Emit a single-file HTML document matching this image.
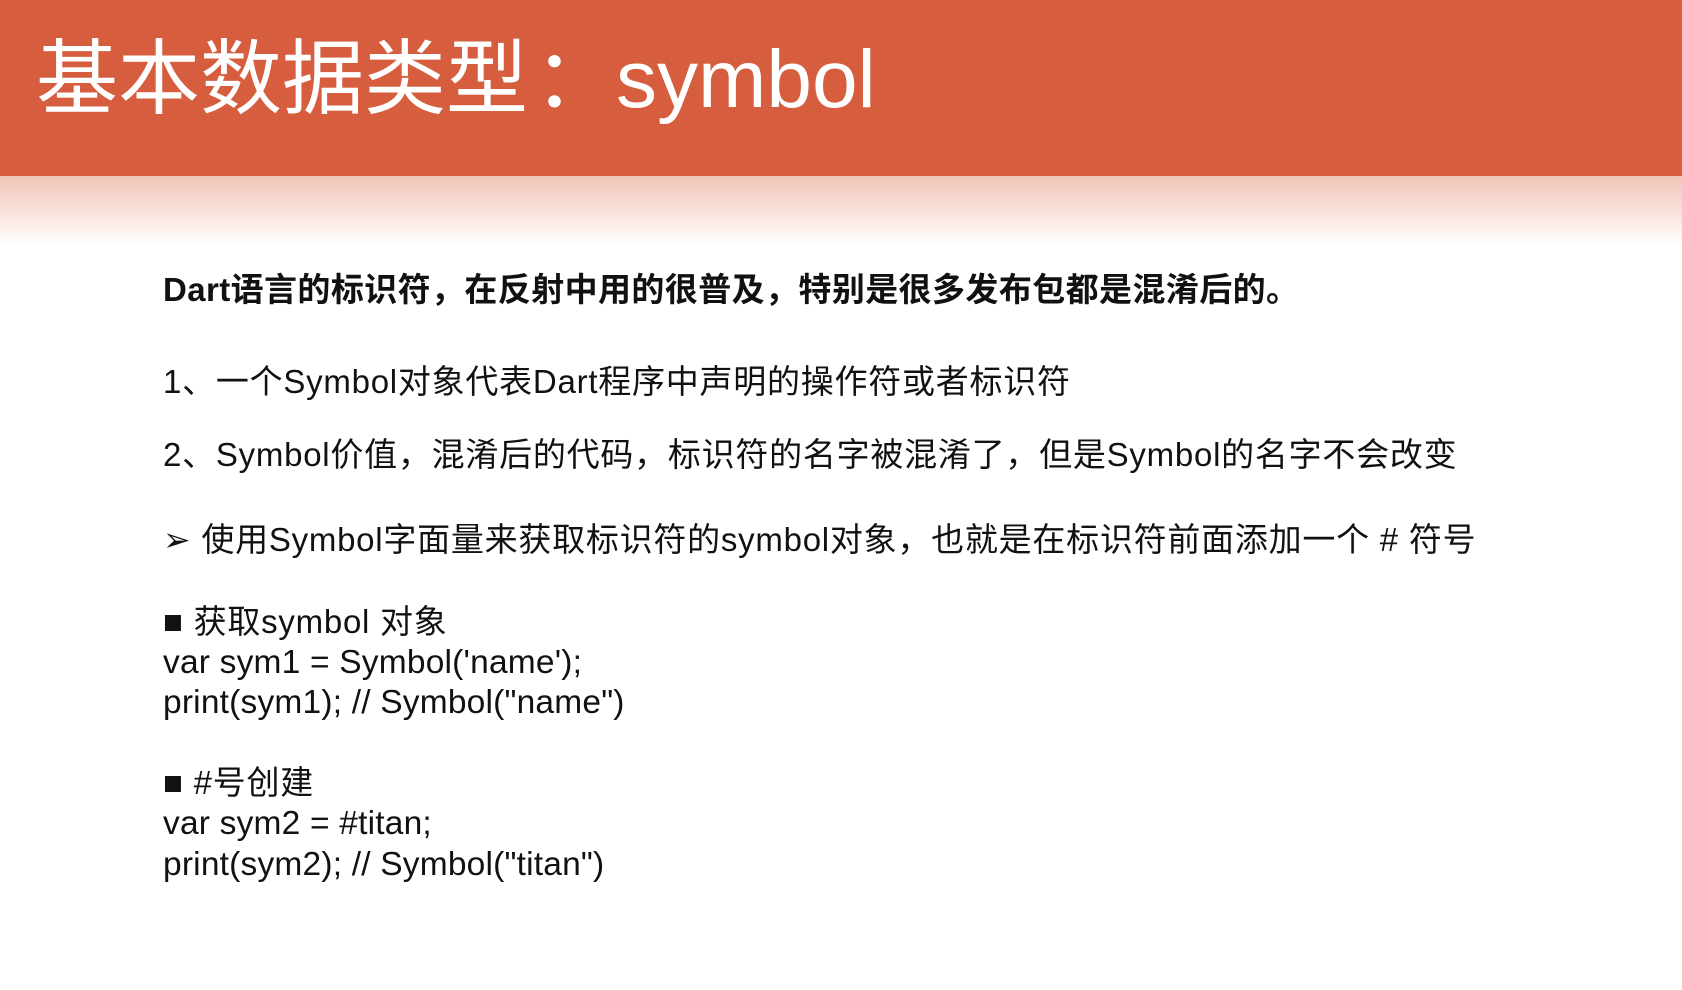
<!DOCTYPE html>
<html><head><meta charset="utf-8"><style>
html,body{margin:0;padding:0;}
body{width:1682px;height:990px;background:#fff;position:relative;overflow:hidden;font-family:"Liberation Sans","Noto Sans CJK SC",sans-serif;color:#111;}
.band{position:absolute;left:0;top:0;width:1682px;height:176px;background:#d65d3d;}
.fade{position:absolute;left:0;top:176px;width:1682px;height:70px;background:linear-gradient(#f1c4b6,#ffffff);}
.title{position:absolute;left:36px;top:30px;font-size:82px;color:#fff;white-space:nowrap;line-height:100px;}
.t{position:absolute;left:163px;white-space:nowrap;font-size:33px;letter-spacing:0.75px;line-height:40px;}
.c{font-size:33.5px;letter-spacing:0.2px;}
.b{font-weight:bold;}
</style></head><body>
<div class="band"></div><div class="fade"></div>
<div class="title">基本数据类型<span style="margin-left:6px">：</span>symbol</div>
<div class="t b" style="top:270px;font-size:33px;letter-spacing:0.4px">Dart语言的标识符，在反射中用的很普及，特别是很多发布包都是混淆后的。</div>
<div class="t" style="top:362px">1、一个Symbol对象代表Dart程序中声明的操作符或者标识符</div>
<div class="t" style="top:435px">2、Symbol价值，混淆后的代码，标识符的名字被混淆了，但是Symbol的名字不会改变</div>
<div class="t" style="top:520px">➢ 使用Symbol字面量来获取标识符的symbol对象，也就是在标识符前面添加一个 # 符号</div>
<div class="t" style="top:602px">■ 获取symbol 对象</div>
<div class="t c" style="top:643px">var sym1 = Symbol('name');</div>
<div class="t c" style="top:683px">print(sym1); // Symbol("name")</div>
<div class="t" style="top:763px">■ #号创建</div>
<div class="t c" style="top:804px">var sym2 = #titan;</div>
<div class="t c" style="top:845px">print(sym2); // Symbol("titan")</div>
</body></html>
